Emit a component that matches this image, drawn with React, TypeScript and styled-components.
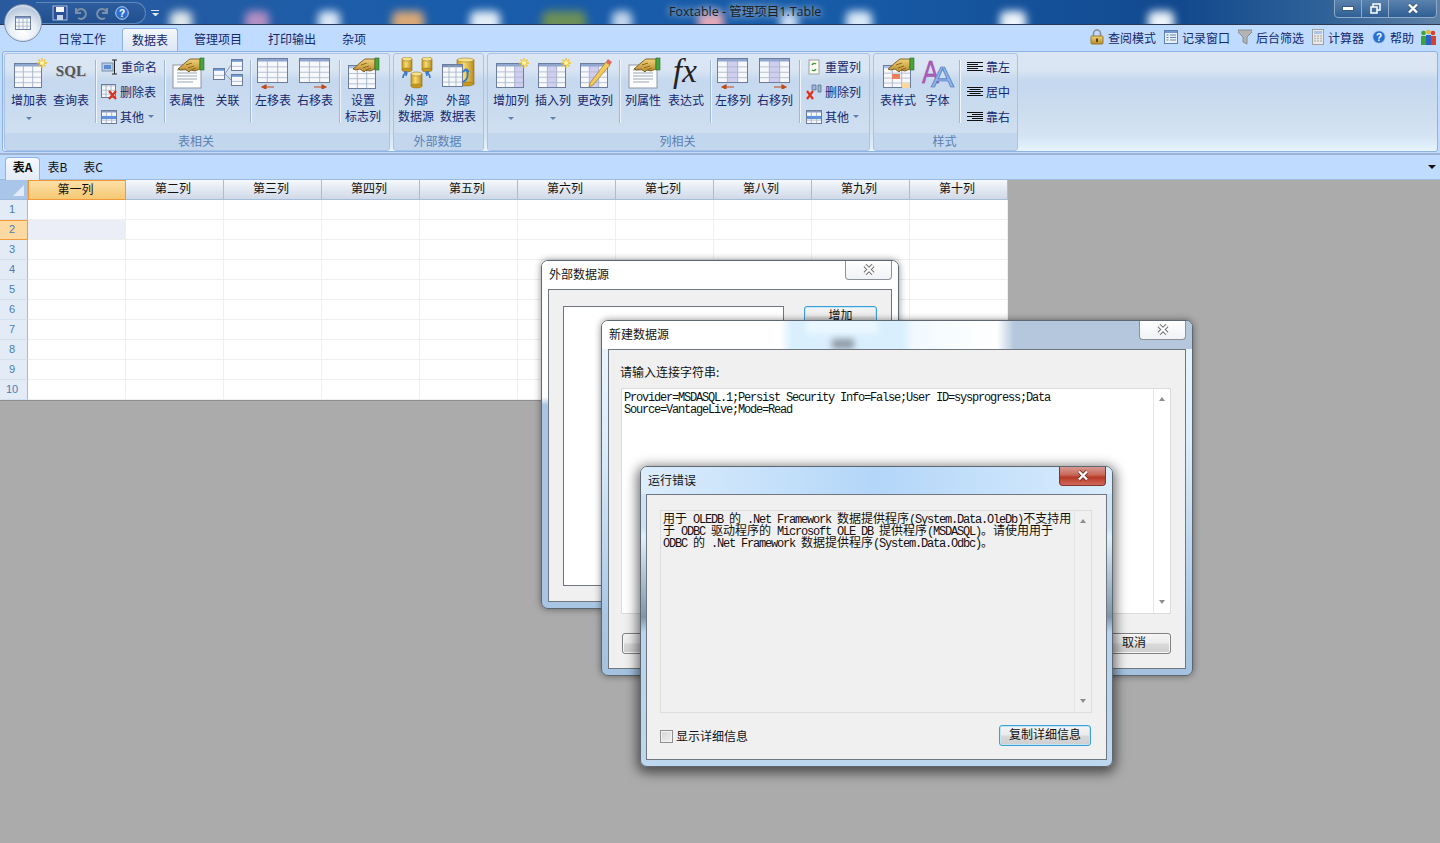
import React from 'react';
import styled, { createGlobalStyle } from 'styled-components';

const CJK = '"Noto Sans CJK SC", "Noto Sans", sans-serif';

const Global = createGlobalStyle`
  html, body { margin: 0; padding: 0; background: #ababab; }
  body { font-family: ${CJK}; font-size: 12px; overflow: hidden; }
  * { box-sizing: border-box; }
`;

const Page = styled.div`
  position: relative; width: 1440px; height: 843px; overflow: hidden;
  display: flex; flex-direction: column; background: #ababab;
`;
const HiddenDefs = styled.svg`width: 0; height: 0; position: absolute;`;
const TextIcon = styled.svg`overflow: visible;`;

/* ---------- title bar ---------- */
const TitleBar = styled.div`
  position: relative; height: 25px; flex: none; overflow: hidden;
  background: linear-gradient(90deg, #2a5a9e 0, #1a5dab 30%, #175aa6 60%, #12498e 82%, #2f6298 92%, #5f80a6 100%);
  border-bottom: 1px solid #2b3a52;
`;
const Blob = styled.div<{ $x: number; $w: number; $c: string }>`
  position: absolute; left: ${p => p.$x}px; top: 11px; width: ${p => p.$w}px; height: 22px;
  background: ${p => p.$c}; filter: blur(4px); border-radius: 6px;
`;
const TitleText = styled.div`
  position: absolute; left: 669px; top: 3px; font: 12.5px/18px "Open Sans", ${CJK};
  color: #1d1d20; white-space: nowrap;
  text-shadow: 0 0 6px #9dbbdd, 0 0 10px #9dbbdd;
`;
const Orb = styled.div`
  position: absolute; left: 4px; top: 4px; width: 38px; height: 38px; border-radius: 50%; z-index: 5;
  background: radial-gradient(circle at 50% 75%, #ffffff 0, #e9eff6 40%, #b9c9dd 72%, #dfe7f1 100%);
  border: 1px solid #7f93ad; box-shadow: 0 0 0 1px #d7e2ef inset;
  display: flex; align-items: center; justify-content: center;
`;
const Qat = styled.div`
  position: absolute; left: 36px; top: 2px; width: 110px; height: 22px; padding-left: 16px;
  border: 1px solid #5f86b8; border-left: none; border-radius: 0 11px 11px 0;
  background: linear-gradient(#2d5d9e, #20508f);
  display: flex; align-items: center; gap: 5px;
`;
const QatMore = styled.div`
  position: absolute; left: 151px; top: 10px; width: 8px; height: 8px; color: #d7e4f3;
  font-size: 0; border-top: 1px solid #dbe6f3;
  &::after { content: ''; display: block; margin: 2px 0 0 1px; border: 3px solid transparent; border-top-color: #dbe6f3; }
`;
const WinControls = styled.div`
  position: absolute; left: 1334px; top: -1px; width: 103px; height: 19px; display: flex;
  border: 1px solid #8fa9c7; border-radius: 0 0 4px 4px;
  background: linear-gradient(#5a82ad, #2f5f95);
`;
const WinBtn = styled.div<{ $w: number }>`
  width: ${p => p.$w}px; display: flex; align-items: center; justify-content: center;
  border-right: 1px solid #8fa9c7; &:last-child { border-right: none; }
`;

/* ---------- tab row ---------- */
const TabRow = styled.div`
  height: 25px; flex: none; background: #bfdbff; display: flex; align-items: flex-end; padding-left: 45px;
`;
const Tab = styled.div<{ $active?: boolean }>`
  height: 23px; padding: 0 10px; margin: 0 3px; line-height: 21px; color: #15286e; font-size: 12px;
  position: relative; top: 1px; z-index: 2;
  ${p => p.$active ? `
    background: linear-gradient(#f4f8fd, #dbe6f4); border: 1px solid #8db2e3; border-bottom: none;
    border-radius: 3px 3px 0 0; padding: 0 9px;` : ''}
`;
const RightTools = styled.div`
  margin-left: auto; display: flex; align-items: center; gap: 8px; height: 24px; padding-right: 4px;
  position: relative; top: -1px;
`;
const ToolItem = styled.div`
  display: flex; align-items: center; gap: 4px; color: #15286e; font-size: 12px; white-space: nowrap;
`;
const PeopleSlot = styled.div`
  display: flex; margin-left: -2px;
`;

/* ---------- ribbon ---------- */
const Ribbon = styled.div`
  height: 103px; flex: none; background: #bfdbff; padding: 1px 2px 0;
`;
const Panel = styled.div`
  height: 101px; border: 1px solid #8db2e3; border-radius: 3px; padding: 1px; display: flex; gap: 3px;
  background: linear-gradient(#dbe6f4 0, #dae5f3 18%, #c4d7ee 30%, #cfdff0 70%, #d4e4f3 85%, #e6f4fc 100%);
`;
const Group = styled.div<{ $w: number }>`
  width: ${p => p.$w}px; height: 98px; flex: none; border: 1px solid #a9c3e4; border-radius: 3px;
  display: flex; flex-direction: column; overflow: hidden;
  background: linear-gradient(#dbe6f4 0, #dae5f3 16%, #c5d8ee 28%, #d2e1f1 100%);
`;
const GroupBody = styled.div<{ $pad: number }>`
  height: 79px; flex: none; display: flex; padding-left: ${p => p.$pad}px;
`;
const GroupLabel = styled.div`
  flex: 1; background: #c2d7ee; color: #5b7fb3; text-align: center; font-size: 12px; line-height: 15px; padding-right: 2px;
`;
const Large = styled.div<{ $w?: number }>`
  width: ${p => p.$w ?? 42}px; flex: none; display: flex; flex-direction: column; align-items: center;
  padding-top: 3px; color: #15286e;
`;
const LargeIcon = styled.div`
  height: 32px; width: 100%; display: flex; align-items: center; justify-content: center; margin-bottom: 3px;
`;
const LargeLabel = styled.div`
  font-size: 12px; line-height: 16px; text-align: center; white-space: nowrap;
`;
const DropArrow = styled.div`
  width: 0; height: 0; border: 3px solid transparent; border-top: 3px solid #5f7fae; margin-top: 9px;
`;
const Sep = styled.div`
  width: 1px; height: 63px; flex: none; margin: 6px 1px 0 3px; background: #9db8d8; box-shadow: 1px 0 0 #eef4fa;
`;
const SmallCol = styled.div<{ $w: number; $pad: number }>`
  width: ${p => p.$w}px; flex: none; display: flex; flex-direction: column; padding-left: ${p => p.$pad}px; color: #15286e;
`;
const SmallRow = styled.div`
  height: 25px; display: flex; align-items: center; gap: 3px; white-space: nowrap; font-size: 12px;
`;
const InlineArrow = styled.span`
  width: 0; height: 0; border: 3px solid transparent; border-top: 3px solid #5f7fae; margin: 3px 0 0 1px;
`;
const SqlMark = styled.span`
  display: inline-block; padding-bottom: 4px;
  font: bold 15px "Liberation Serif", serif; color: #565656; text-shadow: 1px 1px 0 #b9c3d0; letter-spacing: 0.2px;
`;

/* ---------- sheet tabs ---------- */
const SheetBar = styled.div`
  height: 27px; flex: none; background: #bfdbff; border-top: 2px solid #9fb2d2; border-bottom: 1px solid #9cbbe2;
  display: flex; align-items: flex-end; padding-left: 5px; position: relative;
`;
const SheetTab = styled.div<{ $active?: boolean; $w: number }>`
  width: ${p => p.$w}px; height: 23px; text-align: center; line-height: 20px; color: #111; font-size: 12px;
  position: relative; top: 1px;
  ${p => p.$active ? `
    font-weight: bold; line-height: 18px; background: linear-gradient(#f6f9fd, #e3ebf5);
    border: 1px solid #8db2e3; border-bottom: none; border-radius: 4px 4px 0 0;` : ''}
`;
const SheetMenu = styled.div`
  position: absolute; right: 4px; top: 10px; width: 0; height: 0; border: 4px solid transparent; border-top: 4px solid #111;
`;

/* ---------- grid ---------- */
const GridWrap = styled.div`
  width: 1008px; height: 221px; flex: none; background: #fff; display: grid;
  grid-template-columns: 28px repeat(10, 98px); grid-template-rows: 20px repeat(10, 20px);
  border-bottom: 1px solid #8e8e8e;
`;
const Corner = styled.div`
  background: #a9c5e9; position: relative; border-right: 1px solid #9dbad8; border-bottom: 1px solid #9dbad8;
  &::after { content: ''; position: absolute; right: 3px; bottom: 3px; width: 0; height: 0;
    border-left: 11px solid transparent; border-bottom: 11px solid #e3ebf6; }
`;
const ColHead = styled.div<{ $on?: boolean }>`
  font-size: 12px; line-height: 15px; text-align: center; color: #111; padding-right: 3px;
  ${p => p.$on
    ? 'background: linear-gradient(#fbdfa8, #f6c873); border: 1px solid #f29a3a;'
    : 'background: linear-gradient(#f6f8fc, #cfd9e7); border-right: 1px solid #a6bfd9; border-bottom: 1px solid #a6bfd9;'}
`;
const RowHead = styled.div<{ $on?: boolean }>`
  font: 11px/19px "Liberation Sans", sans-serif; text-align: center; color: #4a7db5; padding-right: 3px;
  ${p => p.$on
    ? 'line-height: 17px; background: #fcd9a1; border-top: 1px solid #f29a3a; border-bottom: 1px solid #f29a3a; border-right: 1px solid #f29a3a;'
    : 'background: #e3ebf6; border-right: 1px solid #9dbad8; border-bottom: 1px solid #d5e0ee;'}
`;
const Cell = styled.div<{ $on?: boolean }>`
  background: ${p => p.$on ? '#ebeef6' : '#fff'};
  border-right: 1px solid #efefef; border-bottom: 1px solid #efefef;
`;

/* ---------- dialogs ---------- */
const Dialog = styled.div<{ $x: number; $y: number; $w: number; $h: number; $bg: string; $shadow: string }>`
  position: absolute; left: ${p => p.$x}px; top: ${p => p.$y}px; width: ${p => p.$w}px; height: ${p => p.$h}px;
  border-radius: 7px; border: 1px solid #5f6871; background: ${p => p.$bg}; box-shadow: ${p => p.$shadow};
  display: flex; flex-direction: column;
`;
const DialogHead = styled.div<{ $bg: string; $h: number }>`
  height: ${p => p.$h}px; flex: none; padding: 4px 0 0 7px; font-size: 12px; line-height: 18px; color: #151515;
  background: ${p => p.$bg}; border-radius: 6px 6px 0 0; position: relative; overflow: hidden;
`;
const CloseBtn = styled.div<{ $red?: boolean }>`
  position: absolute; right: 6px; top: -1px; width: 47px; height: 20px; border-radius: 0 0 4px 4px;
  display: flex; align-items: center; justify-content: center;
  ${p => p.$red
    ? 'background: linear-gradient(#d9a09a 0, #c96a5c 45%, #b63a26 60%, #d2695a 100%); border: 1px solid #7c3530; border-top: none;'
    : 'background: linear-gradient(#ffffff, #f0f2f5); border: 1px solid #8b929a; border-top: none;'}
`;
const Ghost = styled.div<{ $x: number; $y: number; $w: number; $h: number; $c: string }>`
  position: absolute; left: ${p => p.$x}px; top: ${p => p.$y}px; width: ${p => p.$w}px; height: ${p => p.$h}px;
  background: ${p => p.$c}; filter: blur(3px);
`;
const Client = styled.div<{ $side: number }>`
  flex: 1; min-height: 0; margin: 0 ${p => p.$side}px 6px; background: #f0f0f0; border: 1px solid #6f7680;
  position: relative; overflow: hidden;
`;
const ListLayout = styled.div`
  display: flex; gap: 20px; padding: 16px 14px 15px; height: 100%; align-items: flex-start;
`;
const ListBox = styled.div`
  width: 223px; height: 280px; background: #fff; border: 1px solid #6f7680;
`;
const PlainBtn = styled.div<{ $focus?: boolean; $w: number }>`
  width: ${p => p.$w}px; height: 21px; flex: none; text-align: center; font-size: 12px; line-height: 16px; color: #111;
  border-radius: 3px; background: linear-gradient(#f4f4f4 0, #ebebeb 48%, #d8d8d8 52%, #cfcfcf 100%);
  border: 1px solid ${p => p.$focus ? '#3c9fd6' : '#7f7f7f'};
  box-shadow: inset 0 0 0 1px ${p => p.$focus ? '#bfe6f8' : '#f8f8f8'};
`;
const ConnectBody = styled.div`
  display: flex; flex-direction: column; height: 100%; padding: 14px 14px 0 12px;
`;
const FieldLabel = styled.div`
  font-size: 12px; line-height: 16px; color: #111; height: 24px; margin-left: -1px;
`;
const TextBox = styled.div<{ $h: number; $bg: string; $edge: string }>`
  height: ${p => p.$h}px; flex: none; background: ${p => p.$bg}; border: 1px solid ${p => p.$edge};
  display: flex; position: relative;
`;
const TextBody = styled.div`
  flex: 1; padding: 1px 2px; font-size: 12px; line-height: 12px; color: #111;
`;
const Line = styled.div`white-space: pre; height: 12px;`;
const MonoRun = styled.span`
  font-family: "Liberation Mono", monospace; font-size: 12px; letter-spacing: -1.2px;
`;
const CjkRun = styled.span`font-family: ${CJK}; font-size: 12px;`;
const ScrollTrack = styled.div`
  width: 17px; flex: none; border-left: 1px solid #e6e6e6; display: flex; flex-direction: column;
  justify-content: space-between; align-items: center; padding: 9px 0;
`;
const ArrowUp = styled.div`width: 0; height: 0; border: 3px solid transparent; border-top: none; border-bottom: 4px solid #8a8f96; margin-top: -1px;`;
const ArrowDown = styled.div`width: 0; height: 0; border: 3px solid transparent; border-bottom: none; border-top: 4px solid #8a8f96;`;
const FooterRow = styled.div`
  display: flex; justify-content: space-between; margin-top: 19px; padding-left: 1px;
`;
const ErrorBody = styled.div`
  height: 100%; padding: 15px 14px 0 13px; display: flex; flex-direction: column;
`;
const ErrorFooter = styled.div`
  display: flex; justify-content: space-between; align-items: center; margin-top: 12px; padding-right: 1px;
`;
const CheckLabel = styled.label`
  display: flex; align-items: center; gap: 3px; font-size: 12px; line-height: 14px; color: #111;
`;
const CheckBox = styled.span`
  width: 13px; height: 13px; margin-top: 2px; border: 1px solid #8e8f8f; background: linear-gradient(135deg, #d4d4d4, #f2f2f2); box-shadow: inset 0 0 0 1px #f4f4f4;
`;

/* ---------- drawings ---------- */
type TblProps = { x: number; y: number; w: number; h: number; cols?: number; rows?: number; hl?: number; head?: string; edge?: string };
const Tbl = ({ x, y, w, h, cols = 3, rows = 4, hl, head = '#8fa6cf', edge = '#6c7c9c' }: TblProps) => {
  const cw = w / cols; const hh = h / (rows + 1) * 0.7;
  const rh = (h - hh) / rows;
  return (
    <g>
      <rect x={x} y={y} width={w} height={h} fill="#f6f8fb" />
      {hl !== undefined && <rect x={x + hl * cw} y={y} width={cw} height={h} fill="#cfcdf0" />}
      <rect x={x} y={y} width={w} height={hh} fill={head} />
      {Array.from({ length: cols - 1 }, (_, i) => (
        <line key={i} x1={x + (i + 1) * cw} x2={x + (i + 1) * cw} y1={y} y2={y + h} stroke="#9aa8c0" strokeWidth=".8" />
      ))}
      {Array.from({ length: rows - 1 }, (_, i) => (
        <line key={i} y1={y + hh + (i + 1) * rh} y2={y + hh + (i + 1) * rh} x1={x} x2={x + w} stroke="#a9b5c9" strokeWidth=".8" />
      ))}
      <rect x={x + .5} y={y + .5} width={w - 1} height={h - 1} fill="none" stroke={edge} />
    </g>
  );
};
const Star = ({ x, y }: { x: number; y: number }) => (
  <g stroke="#f4c21c" strokeWidth="1.3">
    <line x1={x - 5} x2={x + 5} y1={y} y2={y} /><line x1={x} x2={x} y1={y - 5} y2={y + 5} />
    <line x1={x - 3.5} x2={x + 3.5} y1={y - 3.5} y2={y + 3.5} /><line x1={x - 3.5} x2={x + 3.5} y1={y + 3.5} y2={y - 3.5} />
    <circle cx={x} cy={y} r="2" fill="#fff6b0" stroke="none" />
  </g>
);
const Hand = ({ x, y }: { x: number; y: number }) => (
  <g transform={`translate(${x} ${y})`}>
    <path d="M0 11 L8 4 L12 1 L22 1 L22 11 L17 13 L13 12 L11 14 L7 11 L3 12 Z" fill="url(#gold)" stroke="#6a4a12" strokeWidth=".8" />
    <path d="M8 7 L14 5 M10 10 L16 8 M13 12 L18 10" stroke="#7c5716" strokeWidth=".8" fill="none" />
    <rect x="22" y="0" width="4" height="12" fill="#46a53c" stroke="#2b6b26" strokeWidth=".6" />
  </g>
);
const Doc = () => (
  <g>
    <rect x="4" y="8" width="28" height="23" fill="#fdfdfd" stroke="#8d98a8" />
    <path d="M8 16h20M8 19h20M8 22h20M8 25h16M8 13h10" stroke="#9aa7b9" />
  </g>
);
const Cyl = ({ x, y, w, h }: { x: number; y: number; w: number; h: number }) => (
  <g>
    <rect x={x} y={y + 2} width={w} height={h - 3} fill="url(#goldCyl)" stroke="#8a6a16" strokeWidth=".6" />
    <ellipse cx={x + w / 2} cy={y + h - 1} rx={w / 2} ry="2" fill="#c8981e" stroke="#8a6a16" strokeWidth=".5" />
    <ellipse cx={x + w / 2} cy={y + 2} rx={w / 2} ry="2" fill="#f6e08a" stroke="#8a6a16" strokeWidth=".5" />
  </g>
);
const Big = ({ children }: { children: React.ReactNode }) => <svg width="36" height="32" viewBox="0 0 36 32">{children}</svg>;
const Sm = ({ children, w = 16 }: { children: React.ReactNode; w?: number }) => <svg width={w} height="16" viewBox={`0 0 ${w} 16`}>{children}</svg>;

const IcAddTable = () => <Big><Tbl x={3} y={6} w={28} h={25} /><Star x={31} y={6} /></Big>;
const IcMoveTable = ({ dir, hl }: { dir: 'l' | 'r'; hl?: number }) => (
  <Big>
    <Tbl x={2} y={1} w={31} h={25} hl={hl} />
    {dir === 'l'
      ? <path d="M19 30H7M7 30l4-2v4z" stroke="#c2491a" fill="#c2491a" strokeWidth="1.1" />
      : <path d="M17 30h12M29 30l-4-2v4z" stroke="#c2491a" fill="#c2491a" strokeWidth="1.1" />}
  </Big>
);
const IcProps = () => <Big><Doc /><Hand x={9} y={1} /></Big>;
const IcRelation = () => (
  <Big>
    <Tbl x={3} y={11} w={12} h={12} cols={1} rows={2} head="#6f9ad6" />
    <Tbl x={21} y={2} w={12} h={12} cols={1} rows={2} head="#6f9ad6" />
    <Tbl x={21} y={17} w={12} h={12} cols={1} rows={2} head="#6f9ad6" />
    <path d="M21 8 L15 17 L21 23" stroke="#8d9bb2" fill="none" />
  </Big>
);
const IcFlag = () => <Big><Tbl x={3} y={8} w={28} h={24} rows={4} head="#a9c2e8" /><Hand x={8} y={1} /></Big>;
const IcSource = () => (
  <Big>
    <Cyl x={4} y={0} w={10} h={14} /><Cyl x={24} y={0} w={10} h={14} /><Cyl x={13} y={15} w={11} h={15} />
    <path d="M5 21c0-3 2-5 4-6M9 15l-1 4M9 15l-3 0" stroke="#3a78c9" strokeWidth="1.6" fill="none" />
    <path d="M32 21c0-3-2-5-4-6M28 15l1 4M28 15l3 0" stroke="#3a78c9" strokeWidth="1.6" fill="none" />
  </Big>
);
const IcExtTable = () => (
  <Big>
    <Cyl x={17} y={1} w={17} h={27} />
    <Tbl x={2} y={7} w={21} h={23} head="#7f93b5" />
    <path d="M23 25c5-2 6-8 3-13M26 12l-3 3M26 12l3 3" stroke="#3a78c9" strokeWidth="1.8" fill="none" />
  </Big>
);
const IcAddCol = () => <Big><Tbl x={3} y={6} w={28} h={25} hl={2} /><Star x={31} y={6} /></Big>;
const IcInsCol = () => <Big><Tbl x={3} y={6} w={28} h={25} hl={1} /><Star x={31} y={6} /></Big>;
const IcEditCol = () => (
  <Big>
    <Tbl x={3} y={6} w={28} h={25} hl={1} />
    <path d="M13 26 L29 5 L33 8 L16 28 L12 30 Z" fill="#f3c95c" stroke="#9a7a2a" strokeWidth=".7" />
    <path d="M29 5 L31 2 L35 5 L33 8 Z" fill="#e0685c" />
  </Big>
);
const IcFx = () => (
  <TextIcon width="36" height="32" viewBox="0 0 36 32">
    <text x="5" y="25" fontFamily="Liberation Serif" fontStyle="italic" fontSize="33" fill="#222">fx</text>
  </TextIcon>
);
const IcTableStyle = () => (
  <Big>
    <Tbl x={3} y={8} w={28} h={23} rows={4} head="#a9c2e8" />
    <rect x={12} y={17} width={8} height={5} fill="#f57f5b" />
    <rect x={22} y={26} width={8} height={5} fill="#f8d8a0" />
    <Hand x={8} y={1} />
  </Big>
);
const IcFont = () => (
  <TextIcon width="36" height="32" viewBox="0 0 36 32">
    <text x="2" y="26" fontFamily="Liberation Sans" fontSize="32" fill="#b45cc0" stroke="#7d3a8c" strokeWidth=".4" textLength="17" lengthAdjust="spacingAndGlyphs">A</text>
    <text x="11" y="30" fontFamily="Liberation Sans" fontSize="30" fill="#8fb6ea" stroke="#3f6eb5" strokeWidth=".6" textLength="23" lengthAdjust="spacingAndGlyphs">A</text>
  </TextIcon>
);
const IcRename = () => (
  <Sm w={17}>
    <rect x="1" y="4" width="11" height="8" fill="#b7cdea" stroke="#7b8ea8" />
    <rect x="3" y="6" width="7" height="4" fill="#5c8bd0" />
    <path d="M11 1h5M11 15h5M13.5 1v14" stroke="#222" fill="none" />
  </Sm>
);
const IcDelTable = () => (
  <Sm>
    <Tbl x={0} y={0} w={15} h={14} rows={3} head="#c9d3e2" />
    <path d="M8 7l7 8M15 7l-7 8" stroke="#e0301e" strokeWidth="2.2" />
  </Sm>
);
const IcOther = () => (
  <Sm>
    <Tbl x={0} y={1} w={16} h={14} cols={3} rows={3} head="#7f96bd" />
    <rect x="1" y="7" width="14" height="3" fill="#5f93dd" />
  </Sm>
);
const IcReset = () => (
  <Sm>
    <rect x="3" y="1" width="10" height="14" fill="#fbfbf2" stroke="#9aa39a" />
    <path d="M6 6a2.5 2.5 0 0 1 4-1M10 10a2.5 2.5 0 0 1-4 1" stroke="#3d9d3a" strokeWidth="1.4" fill="none" />
  </Sm>
);
const IcDelCol = () => (
  <Sm>
    <path d="M6 1h4v5H6zM12 1h3v7h-3z" fill="#9cb7dc" stroke="#51647f" strokeWidth=".7" />
    <path d="M1 7l6 8M7 7l-6 8" stroke="#e0301e" strokeWidth="2.2" />
  </Sm>
);
const IcAlign = ({ kind }: { kind: 'l' | 'c' | 'r' }) => {
  const s = [16, 11, 16, 11, 16];
  return (
    <Sm>
      {s.map((w, i) => {
        const x = kind === 'l' ? 0 : kind === 'c' ? (16 - w) / 2 : 16 - w;
        return <rect key={i} x={x} y={3 + i * 2} width={w} height="1" fill="#111" />;
      })}
    </Sm>
  );
};
const IcLock = () => (
  <Sm w={14}>
    <path d="M3.5 7V4.5a3.5 3.5 0 0 1 7 0V7" stroke="#8c8c8c" strokeWidth="1.6" fill="none" />
    <rect x="1" y="7" width="12" height="8" rx="1" fill="url(#gold)" stroke="#9a7a26" />
    <rect x="6" y="9.5" width="2" height="3.5" fill="#5a4310" />
  </Sm>
);
const IcForm = () => (
  <Sm w={14}>
    <rect x=".5" y="1.5" width="13" height="13" fill="#e8f0fa" stroke="#5c7fb3" />
    <rect x="1" y="2" width="12" height="2" fill="#6f96cf" />
    <path d="M2.5 6h2M6 6h6M2.5 8.5h2M6 8.5h6M2.5 11h2M6 11h6" stroke="#6583ad" />
  </Sm>
);
const IcFunnel = () => (
  <Sm w={14}>
    <path d="M0 1h14v2L9 8v7L5 13V8L0 3z" fill="#b4b4b4" stroke="#7d7d7d" strokeWidth=".8" />
  </Sm>
);
const IcCalc = () => (
  <Sm w={12}>
    <rect x=".5" y=".5" width="11" height="15" fill="#e9e9e9" stroke="#a0a0a0" />
    <rect x="2" y="2" width="8" height="3" fill="#a9c6e8" />
    <path d="M2.5 7h1M5.5 7h1M8.5 7h1M2.5 9.5h1M5.5 9.5h1M8.5 9.5h1M2.5 12h1M5.5 12h1M8.5 12h1" stroke="#8a8a8a" strokeWidth="1.4" />
  </Sm>
);
const IcHelp = ({ s = 14 }: { s?: number }) => (
  <svg width={s} height={s} viewBox="0 0 14 14">
    <circle cx="7" cy="7" r="6.3" fill="#2a6fd0" stroke="#b9d0ec" />
    <text x="7" y="10.5" textAnchor="middle" fontFamily="Liberation Sans" fontWeight="bold" fontSize="10" fill="#fff">?</text>
  </svg>
);
const IcPeople = () => (
  <Sm>
    <circle cx="3.5" cy="4" r="2.3" fill="#3aa63a" /><rect x="1" y="7" width="5" height="9" fill="#3aa63a" />
    <circle cx="8.5" cy="3" r="2.3" fill="#e6b72a" /><rect x="6" y="6" width="5" height="10" fill="#2a62c8" />
    <circle cx="13" cy="4" r="2.3" fill="#d8402c" /><rect x="11" y="7" width="5" height="9" fill="#d8402c" />
  </Sm>
);
const XMark = ({ c, s = '#555' }: { c: string; s?: string }) => (
  <svg width="12" height="11" viewBox="0 0 12 11">
    <path d="M2 1.5 L10 9.5 M10 1.5 L2 9.5" stroke={s} strokeWidth="4" />
    <path d="M2 1.5 L10 9.5 M10 1.5 L2 9.5" stroke={c} strokeWidth="2.4" />
  </svg>
);

/* ---------- data ---------- */
const blobs = [
  { x: 170, w: 22, c: '#dfe8ea' }, { x: 245, w: 24, c: '#b48fc4' }, { x: 318, w: 22, c: '#dce9f6' },
  { x: 392, w: 32, c: '#d9a878' }, { x: 470, w: 30, c: '#e4eef7' }, { x: 542, w: 44, c: '#6d8f58' },
  { x: 612, w: 20, c: '#c4d6ec' }, { x: 698, w: 26, c: '#e7a9b6' }, { x: 780, w: 18, c: '#cfe0f4' },
  { x: 846, w: 26, c: '#dbeaf8' }, { x: 1000, w: 26, c: '#eef5fb' }, { x: 1148, w: 26, c: '#eef5fb' },
];
const colNames = ['第一列', '第二列', '第三列', '第四列', '第五列', '第六列', '第七列', '第八列', '第九列', '第十列'];
const rows = Array.from({ length: 10 }, (_, i) => i + 1);
const isCjk = /^[\u3000-\u303f\u4e00-\u9fff]+$/;

const Mixed = ({ text }: { text: string }) => (
  <Line>
    {text.split(/([\u3000-\u303f\u4e00-\u9fff]+)/).filter(Boolean).map((t, i) =>
      isCjk.test(t) ? <CjkRun key={i}>{t}</CjkRun> : <MonoRun key={i}>{t}</MonoRun>)}
  </Line>
);

const Btn = ({ icon, label, w, arrow }: { icon: React.ReactNode; label: string[]; w?: number; arrow?: boolean }) => (
  <Large $w={w}>
    <LargeIcon>{icon}</LargeIcon>
    {label.map(l => <LargeLabel key={l}>{l}</LargeLabel>)}
    {arrow && <DropArrow />}
  </Large>
);
const Row = ({ icon, label, more }: { icon: React.ReactNode; label: string; more?: boolean }) => (
  <SmallRow>{icon}<span>{label}</span>{more && <InlineArrow />}</SmallRow>
);

export default function App() {
  return (
    <Page>
      <Global />
      <HiddenDefs>
        <defs>
          <linearGradient id="gold" x1="0" y1="0" x2="0" y2="1">
            <stop offset="0" stopColor="#f1d27a" /><stop offset="1" stopColor="#b88a2a" />
          </linearGradient>
          <linearGradient id="goldCyl" x1="0" y1="0" x2="1" y2="0">
            <stop offset="0" stopColor="#c99a24" /><stop offset=".4" stopColor="#f7dc72" /><stop offset="1" stopColor="#b98a1c" />
          </linearGradient>
        </defs>
      </HiddenDefs>

      <TitleBar>
        {blobs.map(b => <Blob key={b.x} $x={b.x} $w={b.w} $c={b.c} />)}
        <Qat>
          <Sm>
            <rect x="1" y="1" width="14" height="14" fill="#2c4f9c" stroke="#c8d4e8" strokeWidth=".8" />
            <rect x="4" y="2" width="8" height="5" fill="#f4f6fa" /><rect x="5" y="10" width="6" height="5" fill="#c8d4e8" />
          </Sm>
          <Sm><path d="M3 8a5 5 0 1 1 2 5M3 3v5h5" stroke="#7d8fa8" strokeWidth="2" fill="none" /></Sm>
          <Sm><path d="M13 8a5 5 0 1 0-2 5M13 3v5H8" stroke="#7d8fa8" strokeWidth="2" fill="none" /></Sm>
          <IcHelp />
        </Qat>
        <QatMore />
        <TitleText>Foxtable - 管理项目1.Table</TitleText>
        <WinControls>
          <WinBtn $w={27}><svg width="12" height="6"><rect x=".5" y=".5" width="11" height="4" fill="#fff" stroke="#3b5a80" /></svg></WinBtn>
          <WinBtn $w={27}><svg width="11" height="11" viewBox="0 0 11 11"><rect x="3" y="1" width="7" height="6" fill="none" stroke="#fff" strokeWidth="1.5" /><rect x="1" y="4" width="6" height="6" fill="#48709f" stroke="#fff" strokeWidth="1.5" /></svg></WinBtn>
          <WinBtn $w={47}><XMark c="#fff" s="#3b5a80" /></WinBtn>
        </WinControls>
      </TitleBar>

      <Orb><svg width="18" height="16" viewBox="0 0 18 16"><Tbl x={1} y={1} w={16} h={14} cols={4} rows={3} head="#6f8fc0" /></svg></Orb>

      <TabRow>
        <Tab>日常工作</Tab>
        <Tab $active>数据表</Tab>
        <Tab>管理项目</Tab>
        <Tab>打印输出</Tab>
        <Tab>杂项</Tab>
        <RightTools>
          <ToolItem><IcLock />查阅模式</ToolItem>
          <ToolItem><IcForm />记录窗口</ToolItem>
          <ToolItem><IcFunnel />后台筛选</ToolItem>
          <ToolItem><IcCalc />计算器</ToolItem>
          <ToolItem><IcHelp />帮助</ToolItem>
          <PeopleSlot><IcPeople /></PeopleSlot>
        </RightTools>
      </TabRow>

      <Ribbon>
        <Panel>
          <Group $w={386}>
            <GroupBody $pad={3}>
              <Btn icon={<IcAddTable />} label={['增加表']} arrow />
              <Btn icon={<SqlMark>SQL</SqlMark>} label={['查询表']} />
              <Sep />
              <SmallCol $w={64} $pad={4}>
                <Row icon={<IcRename />} label="重命名" />
                <Row icon={<IcDelTable />} label="删除表" />
                <Row icon={<IcOther />} label="其他" more />
              </SmallCol>
              <Sep />
              <Btn icon={<IcProps />} label={['表属性']} />
              <Btn icon={<IcRelation />} label={['关联']} w={39} />
              <Sep />
              <Btn icon={<IcMoveTable dir="l" />} label={['左移表']} />
              <Btn icon={<IcMoveTable dir="r" />} label={['右移表']} />
              <Sep />
              <Btn icon={<IcFlag />} label={['设置', '标志列']} w={44} />
            </GroupBody>
            <GroupLabel>表相关</GroupLabel>
          </Group>
          <Group $w={91}>
            <GroupBody $pad={1}>
              <Btn icon={<IcSource />} label={['外部', '数据源']} />
              <Btn icon={<IcExtTable />} label={['外部', '数据表']} />
            </GroupBody>
            <GroupLabel>外部数据</GroupLabel>
          </Group>
          <Group $w={383}>
            <GroupBody $pad={2}>
              <Btn icon={<IcAddCol />} label={['增加列']} arrow />
              <Btn icon={<IcInsCol />} label={['插入列']} arrow />
              <Btn icon={<IcEditCol />} label={['更改列']} />
              <Sep />
              <Btn icon={<IcProps />} label={['列属性']} w={44} />
              <Btn icon={<IcFx />} label={['表达式']} />
              <Sep />
              <Btn icon={<IcMoveTable dir="l" hl={1} />} label={['左移列']} />
              <Btn icon={<IcMoveTable dir="r" hl={1} />} label={['右移列']} />
              <Sep />
              <SmallCol $w={64} $pad={5}>
                <Row icon={<IcReset />} label="重置列" />
                <Row icon={<IcDelCol />} label="删除列" />
                <Row icon={<IcOther />} label="其他" more />
              </SmallCol>
            </GroupBody>
            <GroupLabel>列相关</GroupLabel>
          </Group>
          <Group $w={145}>
            <GroupBody $pad={3}>
              <Btn icon={<IcTableStyle />} label={['表样式']} />
              <Btn icon={<IcFont />} label={['字体']} w={37} />
              <Sep />
              <SmallCol $w={50} $pad={6}>
                <Row icon={<IcAlign kind="l" />} label="靠左" />
                <Row icon={<IcAlign kind="c" />} label="居中" />
                <Row icon={<IcAlign kind="r" />} label="靠右" />
              </SmallCol>
            </GroupBody>
            <GroupLabel>样式</GroupLabel>
          </Group>
        </Panel>
      </Ribbon>

      <SheetBar>
        <SheetTab $active $w={35}>表A</SheetTab>
        <SheetTab $w={35}>表B</SheetTab>
        <SheetTab $w={36}>表C</SheetTab>
        <SheetMenu />
      </SheetBar>

      <GridWrap>
        <Corner />
        {colNames.map((n, i) => <ColHead key={n} $on={i === 0}>{n}</ColHead>)}
        {rows.map(r => (
          <React.Fragment key={r}>
            <RowHead $on={r === 2}>{r}</RowHead>
            {colNames.map((n, i) => <Cell key={n} $on={r === 2 && i === 0} />)}
          </React.Fragment>
        ))}
      </GridWrap>

      <Dialog $x={541} $y={260} $w={358} $h={349}
        $bg="linear-gradient(#ffffff 0, #ffffff 136px, #a8c6e4 144px, #a8c6e4 100%)"
        $shadow="0 0 7px rgba(0,0,0,.45)">
        <DialogHead $h={28} $bg="#ffffff">
          外部数据源
          <CloseBtn><XMark c="#fff" s="#666" /></CloseBtn>
        </DialogHead>
        <Client $side={6}>
          <ListLayout>
            <ListBox />
            <PlainBtn $w={73} $focus>增加</PlainBtn>
          </ListLayout>
        </Client>
      </Dialog>

      <Dialog $x={601} $y={320} $w={592} $h={356}
        $bg="linear-gradient(#eaf6ff 0, #dceefb 120px, #aac8e6 290px, #a4c2e0 100%)"
        $shadow="0 0 7px rgba(0,0,0,.45)">
        <DialogHead $h={28} $bg="linear-gradient(90deg, #fff 178px, #d9effd 190px, #d9effd 300px, #f2faff 312px, #fff 395px, #b4c7dc 412px, #b4c7dc 100%)">
          <Ghost $x={204} $y={-3} $w={72} $h={16} $c="#eaf7ff" />
          <Ghost $x={230} $y={18} $w={22} $h={10} $c="#8f9aa6" />
          新建数据源
          <CloseBtn><XMark c="#fff" s="#666" /></CloseBtn>
        </DialogHead>
        <Client $side={6}>
          <ConnectBody>
            <FieldLabel>请输入连接字符串:</FieldLabel>
            <TextBox $h={226} $bg="#fff" $edge="#dcdcdc">
              <TextBody>
                <Mixed text="Provider=MSDASQL.1;Persist Security Info=False;User ID=sysprogress;Data" />
                <Mixed text="Source=VantageLive;Mode=Read" />
              </TextBody>
              <ScrollTrack><ArrowUp /><ArrowDown /></ScrollTrack>
            </TextBox>
            <FooterRow>
              <PlainBtn $w={74}>确定</PlainBtn>
              <PlainBtn $w={74}>取消</PlainBtn>
            </FooterRow>
          </ConnectBody>
        </Client>
      </Dialog>

      <Dialog $x={640} $y={466} $w={473} $h={301}
        $bg="linear-gradient(#cfe6fb 0, #c9e2f8 60px, #dff0fb 70px, #7f95ac 150px, #b7d4ec 165px, #bcd7ee 100%)"
        $shadow="0 3px 12px 3px rgba(0,0,0,.55)">
        <DialogHead $h={27} $bg="linear-gradient(90deg, #dcedfc 0, #b3d6f9 50%, #d9ecfc 100%)">
          运行错误
          <CloseBtn $red><XMark c="#fff" s="#7c2a22" /></CloseBtn>
        </DialogHead>
        <Client $side={5}>
          <ErrorBody>
            <TextBox $h={203} $bg="#f0f0f0" $edge="#dedede">
              <TextBody>
                <Mixed text="用于 OLEDB 的 .Net Framework 数据提供程序(System.Data.OleDb)不支持用" />
                <Mixed text="于 ODBC 驱动程序的 Microsoft OLE DB 提供程序(MSDASQL)。请使用用于" />
                <Mixed text="ODBC 的 .Net Framework 数据提供程序(System.Data.Odbc)。" />
              </TextBody>
              <ScrollTrack><ArrowUp /><ArrowDown /></ScrollTrack>
            </TextBox>
            <ErrorFooter>
              <CheckLabel><CheckBox />显示详细信息</CheckLabel>
              <PlainBtn $w={92} $focus>复制详细信息</PlainBtn>
            </ErrorFooter>
          </ErrorBody>
        </Client>
      </Dialog>
    </Page>
  );
}
